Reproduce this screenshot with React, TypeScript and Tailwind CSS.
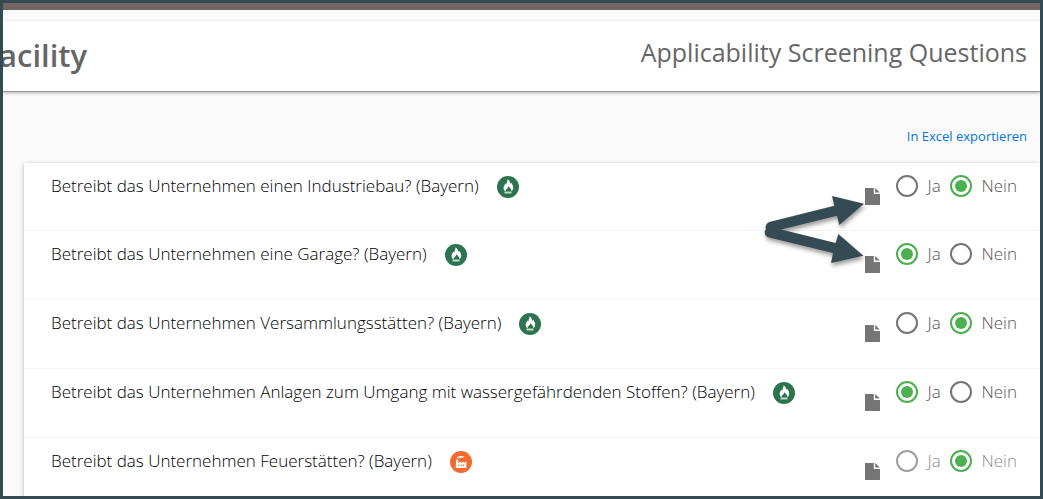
import React, { useState } from "react";

type Question = {
  id: number;
  text: string;
  topic: "fire" | "plant";
  answer: "ja" | "nein";
  faded?: boolean;
};

const initialQuestions: Question[] = [
  {
    id: 1,
    text: "Betreibt das Unternehmen einen Industriebau? (Bayern)",
    topic: "fire",
    answer: "nein",
  },
  {
    id: 2,
    text: "Betreibt das Unternehmen eine Garage? (Bayern)",
    topic: "fire",
    answer: "ja",
  },
  {
    id: 3,
    text: "Betreibt das Unternehmen Versammlungsstätten? (Bayern)",
    topic: "fire",
    answer: "nein",
  },
  {
    id: 4,
    text: "Betreibt das Unternehmen Anlagen zum Umgang mit wassergefährdenden Stoffen? (Bayern)",
    topic: "fire",
    answer: "ja",
  },
  {
    id: 5,
    text: "Betreibt das Unternehmen Feuerstätten? (Bayern)",
    topic: "plant",
    answer: "nein",
    faded: true,
  },
];

const FireIcon = () => (
  <svg viewBox="0 0 22 22" className="size-[22px] shrink-0" aria-hidden="true">
    <circle cx="11" cy="11" r="11" fill="#2c734f" />
    <path
      d="M10.500 3.200c2 1.300 2.700 3 2.500 4.800.6-.3.900-.7 1-1.400 1.200 1.600 2.200 3.300 2.200 5.100 0 1.500-.6 2.700-1.700 3.600 0-1.900-1.200-3.500-3.200-5.100-.1 1.100-.5 1.700-1.100 2.200-.8.700-1.600 1.500-1.700 2.900-1.300-.9-2-2.200-1.900-3.700.1-1.700 1.100-2.800 1.900-4.100.2.600.4 1 .8 1.200.2-2.200 1.300-3.200 1.200-5.500z"
      fill="#fff"
    />
    <path d="M7.500 15.500h7v2h-7z" fill="#c3dacd" />
  </svg>
);

const PlantIcon = () => (
  <svg viewBox="0 0 22 22" className="size-[22px] shrink-0" aria-hidden="true">
    <circle cx="11" cy="11" r="11" fill="#f26a2e" />
    <path
      d="M6.200 8.400h1.800l.5 3.600 2.600-1.400v1.400l2.600-1.400v1.400l2.700-1.400v6.400H5.700z"
      fill="#fff"
    />
    <path
      d="M7 7.200c.1-1.300 1-1.900 2-1.600.7-.8 2-.9 2.800-.3 1.200-.3 2.300-.1 2.700.4-.9 1-2.300 1.200-3.600 1-1.100.8-2.600.7-3.900.5z"
      fill="#fff"
    />
    <path
      d="M8.500 13.500h1v1.700h-1zM10.800 13.500h1v1.700h-1zM13.100 13.500h1v1.700h-1z"
      fill="#f26a2e"
    />
  </svg>
);

const NoteIcon = () => (
  <svg viewBox="0 0 15 17" className="h-[17px] w-[15px]" aria-hidden="true">
    <path d="M0 0h8.800v5.900H15V17H0z" fill="#757575" />
    <path d="M10.200 0L14.800 4.600H10.200z" fill="#757575" />
  </svg>
);

// Hinweispfeile auf die Notiz-Symbole der ersten beiden Zeilen
const HintArrows = () => (
  <svg
    viewBox="0 0 870 360"
    className="pointer-events-none absolute top-[2px] right-0 h-[120px] w-[290px] drop-shadow-[1px_3px_2px_rgba(0,0,0,0.4)]"
    aria-hidden="true"
  >
    <g fill="#344b53">
      <path d="M58 171L253 122L246 93L342 116L268 180L261 152L66 200C44 204 40 178 58 171z" />
      <path d="M66 187L257 234L265 207L340 272L243 294L249 264L54 217C36 208 44 184 66 187z" />
    </g>
  </svg>
);

const radioClass =
  "size-[22px] shrink-0 appearance-none rounded-full border-2 border-[#757575] bg-clip-content p-[3px] checked:border-[#4caf50] checked:bg-[#4caf50]";
const fadedRadioClass =
  "size-[22px] shrink-0 appearance-none rounded-full border-2 border-[#9e9e9e] bg-clip-content p-[3px] checked:border-[#4caf50] checked:bg-[#4caf50]";

const App = () => {
  const [questions, setQuestions] = useState<Question[]>(initialQuestions);

  const changeAnswer = (id: number, answer: "ja" | "nein") => {
    setQuestions(questions.map((q) => (q.id === id ? { ...q, answer } : q)));
  };

  return (
    <div className="h-screen overflow-hidden border-3 border-[#344b53] bg-[#fafafa] font-['Open_Sans',sans-serif]">
      <div className="h-[7px] bg-[#756464]" />

      {/* Kopfzeile */}
      <header className="mt-[11px] flex h-[71px] items-center justify-between border-b border-[#999] bg-white pr-[13px] text-[#666] shadow-[0_1px_3px_rgba(0,0,0,0.3)]">
        <h1 className="-ml-1 pb-0.5 text-[31px] leading-10 font-semibold">
          acility
        </h1>
        <h2 className="pb-2 text-[25px] leading-8">
          Applicability Screening Questions
        </h2>
      </header>

      <main className="pl-[21px]">
        <div className="flex h-[71px] items-end justify-end pr-[13px] pb-[17px]">
          <a href="#export" className="text-[13px] leading-5 text-[#0275d8]">
            In Excel exportieren
          </a>
        </div>

        {/* Fragenliste */}
        <ul className="relative bg-white shadow-[0_1px_4px_rgba(0,0,0,0.3)]">
          {questions.map((q) => (
            <li
              key={q.id}
              className="flex h-[69px] items-start justify-between border-b border-[#f3f3f3] pt-3 pr-[23px] pl-[27px] first:h-[68px]"
            >
              <div className="flex items-start gap-[18px]">
                <p
                  id={`q${q.id}`}
                  className="text-[17px] leading-[22px] font-light text-black"
                >
                  {q.text}
                </p>
                <span className="pt-px">
                  {q.topic === "fire" ? <FireIcon /> : <PlantIcon />}
                </span>
              </div>

              <div className="flex items-start">
                <button type="button" aria-label="Notiz" className="mt-[13px] mr-4">
                  <NoteIcon />
                </button>
                <div
                  role="radiogroup"
                  aria-labelledby={`q${q.id}`}
                  className={
                    q.faded
                      ? "flex text-[17px] leading-[22px] font-light text-[#8e8e8e]"
                      : "flex text-[17px] leading-[22px] font-light text-[#555]"
                  }
                >
                  <label className="flex w-[54px] gap-[10px]">
                    <input
                      type="radio"
                      name={`answer${q.id}`}
                      checked={q.answer === "ja"}
                      onChange={() => changeAnswer(q.id, "ja")}
                      className={q.faded ? fadedRadioClass : radioClass}
                    />
                    Ja
                  </label>
                  <label className="flex gap-[10px]">
                    <input
                      type="radio"
                      name={`answer${q.id}`}
                      checked={q.answer === "nein"}
                      onChange={() => changeAnswer(q.id, "nein")}
                      className={q.faded ? fadedRadioClass : radioClass}
                    />
                    Nein
                  </label>
                </div>
              </div>
            </li>
          ))}
          <li className="contents" role="presentation">
            <HintArrows />
          </li>
        </ul>
      </main>
    </div>
  );
};

export default App;
